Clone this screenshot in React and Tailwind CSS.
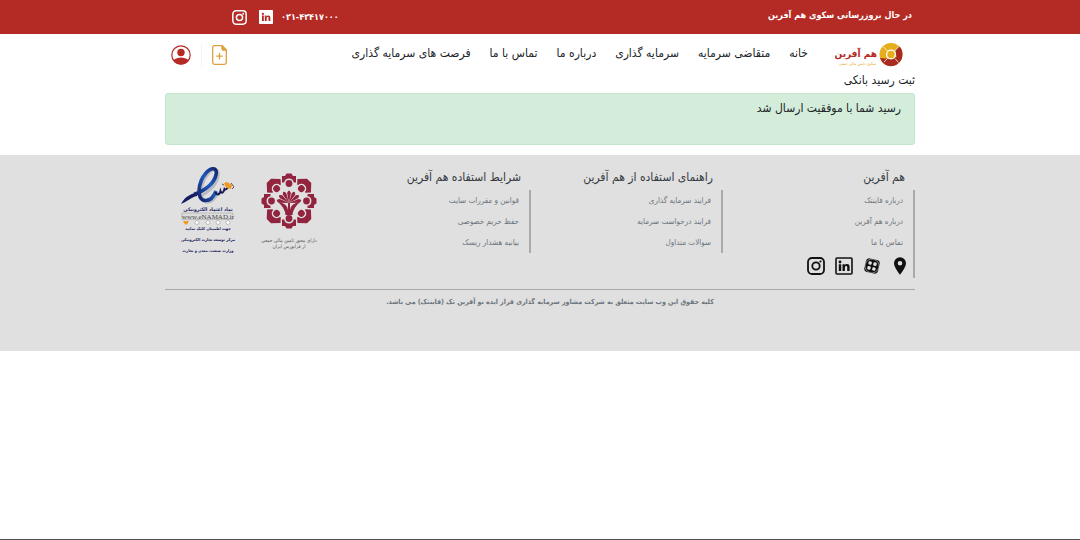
const NAV = ["خانه", "متقاضی سرمایه", "سرمایه گذاری", "درباره ما", "تماس با ما", "فرصت های سرمایه گذاری"];

const COLUMNS = [
  { title: "هم آفرین", links: ["درباره فاینتک", "درباره هم آفرین", "تماس با ما"], social: true },
  { title: "راهنمای استفاده از هم آفرین", links: ["فرایند سرمایه گذاری", "فرایند درخواست سرمایه", "سوالات متداول"] },
  { title: "شرایط استفاده هم آفرین", links: ["قوانین و مقررات سایت", "حفظ حریم خصوصی", "بیانیه هشدار ریسک"] },
];

function Instagram({ size }) {
  return (
    <svg width={size} height={size} viewBox="0 0 18 18" fill="none" stroke="currentColor" aria-hidden="true">
      <rect x="1" y="1" width="16" height="16" rx="4" strokeWidth="1.8" />
      <circle cx="9" cy="9" r="3.7" strokeWidth="1.8" />
      <circle cx="13.5" cy="4.5" r="1.1" fill="currentColor" stroke="none" />
    </svg>
  );
}

function LinkedinGlyph() {
  return (
    <>
      <circle cx="5" cy="5" r="1.4" />
      <path d="M3.800 7.200h2.400v6.800H3.800zM7.500 7.200h2.200v1c.4-.7 1.200-1.200 2.200-1.200 2.100 0 2.700 1.300 2.700 3.100V14h-2.400v-3.500c0-.9-.1-1.600-1.100-1.600s-1.200.8-1.200 1.600V14H7.500z" />
    </>
  );
}

function LinkedinSolid() {
  return (
    <svg width="14" height="14" viewBox="0 0 18 18" aria-hidden="true">
      <rect width="18" height="18" rx="1" fill="#fff" />
      <g fill="#b42b26">
        <LinkedinGlyph />
      </g>
    </svg>
  );
}

function LinkedinOutline() {
  return (
    <svg width="18" height="18" viewBox="0 0 18 18" fill="currentColor" aria-hidden="true">
      <rect x="1" y="1" width="16" height="16" rx="1" fill="none" stroke="currentColor" strokeWidth="1.6" />
      <LinkedinGlyph />
    </svg>
  );
}

function Aparat() {
  return (
    <svg width="18" height="18" viewBox="0 0 18 18" aria-hidden="true">
      <g transform="rotate(13 9 9)">
        <rect x="2" y="2" width="14" height="14" rx="3.500" fill="currentColor" />
        <circle cx="9" cy="9" r="7" fill="currentColor" stroke="#e0e0e0" strokeWidth="0.500" />
        <g fill="#e0e0e0">
          <rect x="4.800" y="4.800" width="3.400" height="3.400" rx="1.200" />
          <rect x="9.800" y="4.800" width="3.400" height="3.400" rx="1.200" />
          <rect x="4.800" y="9.800" width="3.400" height="3.400" rx="1.200" />
          <rect x="9.800" y="9.800" width="3.400" height="3.400" rx="1.200" />
        </g>
      </g>
    </svg>
  );
}

function Pin() {
  return (
    <svg width="18" height="18" viewBox="0 0 18 18" aria-hidden="true">
      <path fill="currentColor" fillRule="evenodd" d="M9 .3a6 6 0 0 0-6 6C3 10.500 9 17.800 9 17.800s6-7.300 6-11.500a6 6 0 0 0-6-6zm0 3.700a2.300 2.300 0 1 1 0 4.600 2.300 2.300 0 0 1 0-4.600z" />
    </svg>
  );
}

function Account() {
  return (
    <svg width="20" height="20" viewBox="0 0 20 20" aria-hidden="true">
      <clipPath id="account-clip"><circle cx="10" cy="10" r="9.500" /></clipPath>
      <circle cx="10" cy="7.500" r="3.700" fill="#b42b26" />
      <ellipse cx="10" cy="18" rx="8.500" ry="5.500" fill="#b42b26" clipPath="url(#account-clip)" />
      <circle cx="10" cy="10" r="9.200" fill="none" stroke="#b42b26" strokeWidth="1.200" />
    </svg>
  );
}

function NewFile() {
  return (
    <svg width="15" height="20" viewBox="0 0 15 20" fill="none" stroke="#dea03c" strokeWidth="1.300" aria-hidden="true">
      <path d="M10 .7H2.500A1.800 1.800 0 0 0 .7 2.500v15a1.800 1.800 0 0 0 1.800 1.800h10a1.800 1.800 0 0 0 1.800-1.800V5z" />
      <path d="M10 .7v3.200c0 .7.500 1.200 1.200 1.200h3.100z" fill="#dea03c" />
      <path d="M7.500 8v6.500M4.300 11.200h6.400" />
    </svg>
  );
}

function Logo() {
  return (
    <svg width="68" height="26" viewBox="0 0 68 26" role="img" aria-label="هم آفرین">
      <circle cx="56" cy="12.500" r="11.500" fill="#e5ae1a" />
      <path d="M45 16A11.500 11.500 0 0 0 67.500 12.500C67.500 8 66 5.500 64 4.500L60.500 8 61.500 15 55 17z" fill="#a82a20" />
      <path d="M48 4.500l4.500 4.500M64 4.500l-4.500 4.500M49 20l3.500-3.500M63.500 20.500L60 16.500" stroke="#fff" strokeWidth="0.800" />
      <circle cx="56" cy="12.500" r="5" fill="#fff" />
      <circle cx="56" cy="12.500" r="3.700" fill="#e5ae1a" />
      <text x="42" y="15" direction="rtl" fill="#b42b26" fontSize="10" fontWeight="700">هم آفرین</text>
      <text x="41" y="23" direction="rtl" fill="#e5ae1a" fontSize="4">سکوی تامین مالی جمعی</text>
    </svg>
  );
}

function Enamad() {
  return (
    <svg width="60" height="94" viewBox="0 0 60 94" role="img" aria-label="نماد اعتماد الکترونیکی">
      <defs>
        <linearGradient id="enamad-blue" x1="0" y1="1" x2="1" y2="0">
          <stop offset="0" stopColor="#111450" />
          <stop offset="0.600" stopColor="#205bc0" />
          <stop offset="1" stopColor="#14246e" />
        </linearGradient>
      </defs>
      <path d="M21 32C33 27 39 20 41 12C43 3 36 3 31 9C23 18 21 37 31 37C36 37 39 32 41 27" fill="none" stroke="#babac0" strokeWidth="3" />
      <path d="M4 39C9 30 15 29 21 27L20 31C14 32 10 37 4 39z" fill="#151b60" />
      <path d="M17 29.500C29 25 37 18 39 10C41 2 34 2 29 8C21 17 19 35 28 35.500C34 36 37 31 39 26" fill="none" stroke="url(#enamad-blue)" strokeWidth="3.600" />
      <path d="M38.500 27c1 4 4 3 5-1 1 3 3 2 4-2 1 1 3 0 4-3" fill="none" stroke="#191a55" strokeWidth="2" />
      <path d="M47 18l3-1 5 3-1 4-4-1-2-2z" fill="#f09a24" />
      <path d="M54 18l3 4-2 2M45 19l2 1" fill="none" stroke="#555" />
      <g textAnchor="middle" fill="#18205f">
        <text x="31" y="46" fontSize="5" fontWeight="700">نماد اعتماد الکترونیکی</text>
        <rect x="5" y="48" width="51" height="6.500" fill="#ddd" stroke="#999" strokeWidth="0.500" />
        <text x="31" y="53.500" fontSize="7" fontFamily="Liberation Serif" fill="#444">www.eNAMAD.ir</text>
        <text x="31" y="65" fontSize="4" fontWeight="700">جهت اطمینان کلیک نمایید</text>
        <text x="31" y="76" fontSize="4" fontWeight="700">مرکز توسعه تجارت الکترونیکی</text>
        <text x="31" y="87" fontSize="4" fontWeight="700">وزارت صنعت، معدن و تجارت</text>
      </g>
      <path d="M6 56h6l-2 3.500H8z" fill="#f09a24" />
      <g fill="#fff" stroke="#999" strokeWidth="0.600">
        <circle cx="20" cy="57.500" r="2" /><circle cx="31" cy="57.500" r="2" /><circle cx="41" cy="57.500" r="2" /><circle cx="51" cy="57.500" r="2" />
      </g>
    </svg>
  );
}

const SIDES = [0, 90, 180, 270];
const CORNERS = [45, 135, 225, 315];
const PETALS = [-78, -52, -26, 0, 26, 52, 78];

function Farabourse() {
  return (
    <svg width="60" height="80" viewBox="0 0 60 80" role="img" aria-label="فرابورس ایران">
      <g transform="translate(28 28)" fill="#92243f">
        {SIDES.map((a) => (
          <g key={a} transform={`rotate(${a})`}>
            <path d="M-7-25H-4L-2.500-27.500H2.500L4-25H7V-18.500H4.800A4.900 4.900 0 0 0-4.800-18.500H-7z" />
            <circle cy="-17.500" r="3.400" />
          </g>
        ))}
        {CORNERS.map((a) => (
          <g key={a} transform={`rotate(${a})`}>
            <path d="M-9.500-21.500L-3-28.500H3L9.500-21.500 6-17.500H4.900A4.900 4.900 0 0 0-4.900-17.500H-6z" />
            <circle cy="-17.500" r="3.400" />
          </g>
        ))}
        {PETALS.map((a) => (
          <path key={a} transform={`rotate(${a} 0 2)`} d="M0 2L-1.900-8Q0-13 1.900-8z" />
        ))}
        <path d="M-11 1Q-2 2-1 9V2H1V9Q2 2 11 1Q4 7 3.500 14H-3.500Q-4 7-11 1z" />
      </g>
      <g textAnchor="middle" fill="#555" fontSize="5">
        <text x="28" y="69">دارای مجوز تامین مالی جمعی</text>
        <text x="28" y="75">از فرابورس ایران</text>
      </g>
    </svg>
  );
}

export default function App() {
  return (
    <div dir="rtl" className="flex min-h-screen flex-col border-b border-[#505052] bg-white font-['DejaVu_Sans_Condensed','DejaVu_Sans',sans-serif] text-[#212529]">
      <div className="bg-[#b42b26] text-white">
        <div className="mx-auto flex h-[34px] w-full max-w-[750px] items-center justify-between">
          <p className="pr-[3px] pb-1 text-[9px] leading-4 font-bold">در حال بروزرسانی سکوی هم آفرین</p>
          <div className="flex items-center gap-2 pl-[67px]">
            <a href="tel:02142417000" dir="ltr" className="text-[9px] leading-4 font-bold">۰۲۱-۴۲۴۱۷۰۰۰</a>
            <div className="flex items-center gap-3">
              <a href="#linkedin" aria-label="لینکدین"><LinkedinSolid /></a>
              <a href="#instagram" aria-label="اینستاگرام"><Instagram size={15} /></a>
            </div>
          </div>
        </div>
      </div>

      <header className="mx-auto flex w-full max-w-[750px] items-center justify-between pt-2">
        <div className="flex items-center">
          <a href="#home" className="pr-3"><Logo /></a>
          <nav className="flex gap-[19px] pr-[27px] pb-1 text-xs leading-4 whitespace-nowrap">
            {NAV.map((label) => (
              <a key={label} href="#nav">{label}</a>
            ))}
          </nav>
        </div>
        <div className="flex items-center pl-1.5">
          <button type="button" aria-label="درخواست جدید" className="border-l border-gray-100 py-0.5 pl-2.5"><NewFile /></button>
          <button type="button" aria-label="حساب کاربری" className="pr-2.5"><Account /></button>
        </div>
      </header>

      <main className="mx-auto w-full max-w-[750px] pt-1">
        <h1 className="pb-[5px] text-xs leading-4">ثبت رسید بانکی</h1>
        <div role="alert" className="rounded-[3px] border border-[#c3e6cb] bg-[#d4edda] px-[13px] pt-1.5 pb-7 text-xs leading-4">
          رسید شما با موفقیت ارسال شد
        </div>
      </main>

      <footer className="mt-2.5 bg-[#e0e0e0] pt-2.5 pb-[41px]">
        <div className="mx-auto w-full max-w-[750px]">
          <div className="flex justify-between border-b border-[#a9a9a9] pb-[11px]">
            <div className="flex pt-0.5">
              {COLUMNS.map((c) => (
                <section key={c.title} className="w-48">
                  <h2 className="pr-2.5 pb-[3px] text-xs leading-5 text-[#343a40]">{c.title}</h2>
                  <div className="border-r-2 border-[#aaa] pr-2.5">
                    <ul className="text-[8px] leading-[21px] text-[#6c757d]">
                      {c.links.map((l) => (
                        <li key={l}><a href="#link">{l}</a></li>
                      ))}
                    </ul>
                    {c.social && (
                      <div className="-mr-1.5 flex gap-2.5 pt-1 pb-[3px] text-[#111]">
                        <a href="#map" aria-label="نشانی"><Pin /></a>
                        <a href="#aparat" aria-label="آپارات"><Aparat /></a>
                        <a href="#linkedin" aria-label="لینکدین"><LinkedinOutline /></a>
                        <a href="#instagram" aria-label="اینستاگرام"><Instagram size={18} /></a>
                      </div>
                    )}
                  </div>
                </section>
              ))}
            </div>
            <div className="flex gap-6 pl-3">
              <a href="#farabourse" className="pt-2"><Farabourse /></a>
              <a href="#enamad"><Enamad /></a>
            </div>
          </div>
          <p className="pt-1 pl-5 text-center text-[7px] leading-4 font-bold text-[#6c757d]">
            کلیه حقوق این وب سایت متعلق به شرکت مشاور سرمایه گذاری فراز ایده نو آفرین تک (فاینتک) می باشد.
          </p>
        </div>
      </footer>
    </div>
  );
}
